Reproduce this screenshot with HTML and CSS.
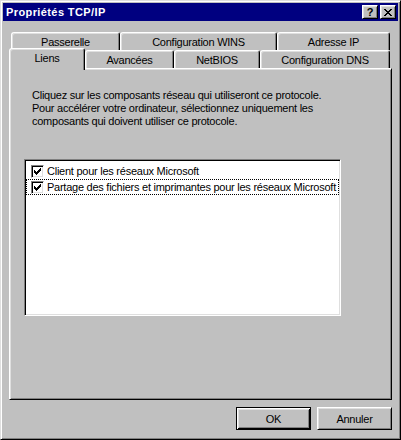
FILE: index.html
```html
<!DOCTYPE html>
<html lang="fr">
<head>
<meta charset="utf-8">
<title>Propriétés TCP/IP</title>
<link rel="stylesheet" href="styles.css">
</head>
<body>
<div class="window">
  <div class="titlebar">
    <span class="title">Propriétés TCP/IP</span>
    <div class="tbtns">
      <div class="tbtn help">?</div>
      <div class="tbtn close">
        <svg width="8" height="7" viewBox="0 0 8 7"><path d="M0 0h2v1h1v1h2V1h1V0h2v1H7v1H6v1H5v1h1v1h1v1h1v1H6V6H5V5H3v1H2v1H0V6h1V5h1V4h1V3H2V2H1V1H0z" fill="#000"/></svg>
      </div>
    </div>
  </div>
  <div class="body">
    <div class="tabs">
      <div class="tabrow back">
        <div class="tab t-pass">Passerelle</div>
        <div class="tab t-wins">Configuration WINS</div>
        <div class="tab t-ip">Adresse IP</div>
      </div>
      <div class="tabrow front">
        <div class="tab t-liens sel">Liens</div>
        <div class="tab t-avan">Avancées</div>
        <div class="tab t-netb">NetBIOS</div>
        <div class="tab t-dns">Configuration DNS</div>
      </div>
    </div>
    <div class="panel">
      <p class="desc">Cliquez sur les composants réseau qui utiliseront ce protocole.<br>Pour accélérer votre ordinateur, sélectionnez uniquement les<br>composants qui doivent utiliser ce protocole.</p>
      <div class="listbox">
        <div class="item">
          <span class="check"><svg width="7" height="7" viewBox="0 0 7 7"><path d="M6 0h1v3H6v1H5v1H4v1H3v1H2V6H1V5H0V2h1v1h1v1h1V3h1V2h1V1h1z" fill="#000"/></svg></span>
          <span class="label">Client pour les réseaux Microsoft</span>
        </div>
        <div class="item focus">
          <span class="check"><svg width="7" height="7" viewBox="0 0 7 7"><path d="M6 0h1v3H6v1H5v1H4v1H3v1H2V6H1V5H0V2h1v1h1v1h1V3h1V2h1V1h1z" fill="#000"/></svg></span>
          <span class="label">Partage des fichiers et imprimantes pour les réseaux Microsoft</span>
        </div>
      </div>
    </div>
    <div class="actions">
      <div class="btn default">OK</div>
      <div class="btn">Annuler</div>
    </div>
  </div>
</div>
</body>
</html>
```
FILE: styles.css
```css
* { box-sizing: border-box; }

body {
  margin: 0;
  width: 401px;
  height: 440px;
  overflow: hidden;
  background: #c0c0c0;
  font-family: "Liberation Sans", Arial, sans-serif;
  font-size: 11px;
  letter-spacing: -0.25px;
  color: #000;
}

.window {
  width: 401px;
  height: 440px;
  background: #c0c0c0;
  border: 1px solid;
  border-color: #dfdfdf #000 #000 #dfdfdf;
  box-shadow: inset 1px 1px #fff, inset -1px -1px #808080;
  padding: 2px;
  display: flex;
  flex-direction: column;
}

.titlebar {
  height: 18px;
  background: #000080;
  color: #fff;
  display: flex;
  align-items: center;
  justify-content: space-between;
  padding: 0 2px 0 3px;
}

.title {
  font-weight: bold;
  font-size: 11px;
  letter-spacing: 0.4px;
}

.tbtns {
  display: flex;
  gap: 2px;
}

.tbtn {
  width: 16px;
  height: 14px;
  background: #c0c0c0;
  border: 1px solid;
  border-color: #fff #000 #000 #fff;
  box-shadow: inset 1px 1px #dfdfdf, inset -1px -1px #808080;
  display: flex;
  align-items: center;
  justify-content: center;
  color: #000;
}

.help {
  font-weight: bold;
  font-size: 11px;
  line-height: 1;
  letter-spacing: 0;
}

.body {
  flex: 1;
  display: flex;
  flex-direction: column;
  padding: 0 6px;
}

.tabs {
  margin-top: 11px;
}

.tabrow {
  display: flex;
  height: 18px;
}

.back {
  padding-left: 2px;
}

.front {
  align-items: flex-end;
}

.tab {
  height: 18px;
  border: 1px solid;
  border-bottom: none;
  border-color: #fff #000 transparent #fff;
  border-radius: 3px 3px 0 0;
  box-shadow: inset 1px 1px #dfdfdf, inset -1px 0 #808080;
  background: #c0c0c0;
  display: flex;
  align-items: center;
  justify-content: center;
  white-space: nowrap;
  padding-top: 1px;
}

.t-pass { width: 109px; }
.t-wins { width: 157px; }
.t-ip { width: 113px; }
.t-liens { width: 76px; }
.t-avan { width: 89px; }
.t-netb { width: 86px; }
.t-dns { width: 130px; }

.tab.sel {
  height: 22px;
  margin-bottom: -2px;
  position: relative;
  z-index: 1;
  padding-top: 0;
  padding-bottom: 4px;
}

.panel {
  height: 332px;
  border: 1px solid;
  border-color: #fff #000 #000 #fff;
  box-shadow: inset 1px 1px #dfdfdf, inset -1px -1px #808080;
  padding: 20px 14px 0 14px;
}

.desc {
  margin: 0 0 0 8px;
  line-height: 13px;
}

.listbox {
  margin-top: 31px;
  width: 317px;
  height: 157px;
  background: #fff;
  border: 1px solid;
  border-color: #808080 #fff #fff #808080;
  box-shadow: inset 1px 1px #000, inset -1px -1px #dfdfdf;
  padding: 3px 1px 0 1px;
}

.item {
  height: 16px;
  display: flex;
  align-items: center;
  padding-left: 4px;
  gap: 3px;
  border: 1px solid transparent;
  white-space: nowrap;
}

.item.focus {
  border: 1px dotted #000;
}

.check {
  width: 13px;
  height: 13px;
  flex: none;
  background: #fff;
  border: 1px solid;
  border-color: #808080 #fff #fff #808080;
  box-shadow: inset 1px 1px #000, inset -1px -1px #dfdfdf;
  display: flex;
  align-items: center;
  justify-content: center;
}

.check svg {
  display: block;
}

.actions {
  display: flex;
  justify-content: flex-end;
  gap: 6px;
  margin-top: 7px;
}

.btn {
  width: 75px;
  height: 23px;
  border: 1px solid;
  border-color: #fff #000 #000 #fff;
  box-shadow: inset 1px 1px #dfdfdf, inset -1px -1px #808080;
  display: flex;
  align-items: center;
  justify-content: center;
}

.btn.default {
  border-color: #000;
  box-shadow: inset 1px 1px #fff, inset -1px -1px #000, inset 2px 2px #dfdfdf, inset -2px -2px #808080;
}
```
